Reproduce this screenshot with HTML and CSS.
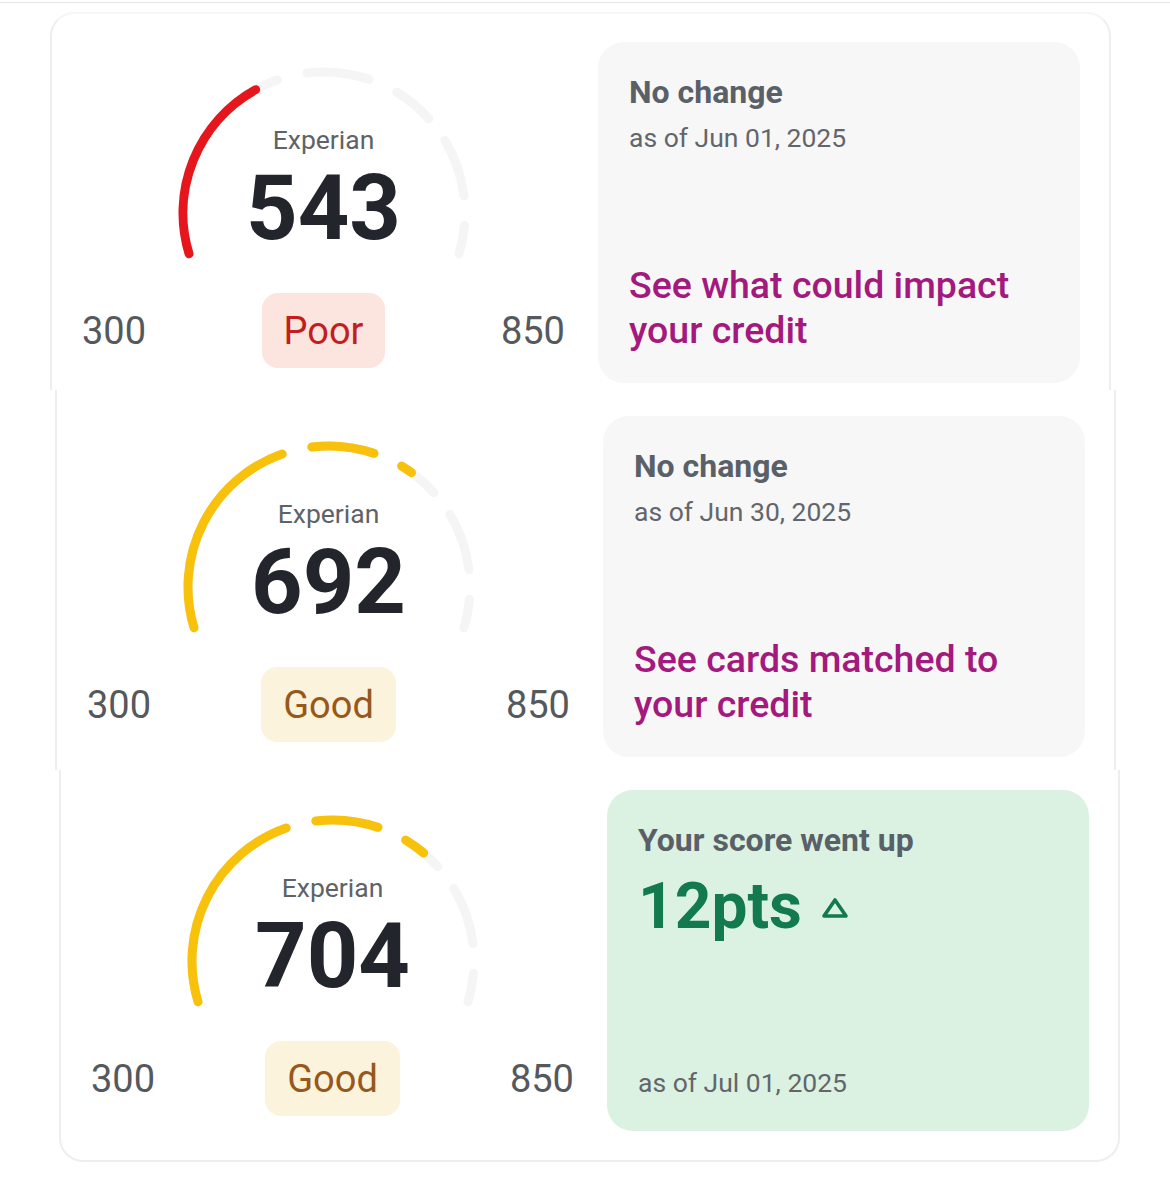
FILE: index.html
```html
<!DOCTYPE html>
<html lang="en">
<head>
<meta charset="utf-8">
<title>Credit score history</title>
<link rel="stylesheet" href="styles.css">
</head>
<body>
<div class="topline"></div>

<section class="shot shot-1">
  <div class="card card-1">
    <div class="gauge">
      <div class="dial">
        <svg class="arc" width="300" height="222" viewBox="0 0 300 222">
          <path class="track" d="M15.02 211.75 A141 141 0 0 1 103.16 38.01"/>
          <path class="track" d="M132.81 31.06 A141 141 0 0 1 194.98 37.36"/>
          <path class="track" d="M222.62 50.13 A141 141 0 0 1 254.78 76.66"/>
          <path class="track" d="M270.86 98.39 A141 141 0 0 1 289.94 153.81"/>
          <path class="track" d="M290.46 183.29 A141 141 0 0 1 284.98 211.75"/>
          <path class="fill fill-poor" d="M15.02 211.75 A141 141 0 0 1 81.64 47.68"/>
        </svg>
        <div class="readout">
          <div class="bureau">Experian</div>
          <div class="score">543</div>
        </div>
      </div>
      <div class="range">
        <span class="bound">300</span>
        <span class="rating rating-poor">Poor</span>
        <span class="bound">850</span>
      </div>
    </div>
    <div class="panel">
      <div>
        <div class="panel-title">No change</div>
        <div class="panel-date">as of Jun 01, 2025</div>
      </div>
      <a class="panel-link" href="#">See what could impact your credit</a>
    </div>
  </div>
</section>

<section class="shot shot-2">
  <div class="card card-2">
    <div class="gauge">
      <div class="dial">
        <svg class="arc" width="300" height="222" viewBox="0 0 300 222">
          <path class="track" d="M15.02 211.75 A141 141 0 0 1 103.16 38.01"/>
          <path class="track" d="M132.81 31.06 A141 141 0 0 1 194.98 37.36"/>
          <path class="track" d="M222.62 50.13 A141 141 0 0 1 254.78 76.66"/>
          <path class="track" d="M270.86 98.39 A141 141 0 0 1 289.94 153.81"/>
          <path class="track" d="M290.46 183.29 A141 141 0 0 1 284.98 211.75"/>
          <path class="fill fill-good" d="M15.02 211.75 A141 141 0 0 1 103.16 38.01"/>
          <path class="fill fill-good" d="M132.81 31.06 A141 141 0 0 1 194.98 37.36"/>
          <path class="fill fill-good" d="M222.62 50.13 A141 141 0 0 1 232.49 56.64"/>
        </svg>
        <div class="readout">
          <div class="bureau">Experian</div>
          <div class="score">692</div>
        </div>
      </div>
      <div class="range">
        <span class="bound">300</span>
        <span class="rating rating-good">Good</span>
        <span class="bound">850</span>
      </div>
    </div>
    <div class="panel">
      <div>
        <div class="panel-title">No change</div>
        <div class="panel-date">as of Jun 30, 2025</div>
      </div>
      <a class="panel-link" href="#">See cards matched to your credit</a>
    </div>
  </div>
</section>

<section class="shot shot-3">
  <div class="card card-3">
    <div class="gauge">
      <div class="dial">
        <svg class="arc" width="300" height="222" viewBox="0 0 300 222">
          <path class="track" d="M15.02 211.75 A141 141 0 0 1 103.16 38.01"/>
          <path class="track" d="M132.81 31.06 A141 141 0 0 1 194.98 37.36"/>
          <path class="track" d="M222.62 50.13 A141 141 0 0 1 254.78 76.66"/>
          <path class="track" d="M270.86 98.39 A141 141 0 0 1 289.94 153.81"/>
          <path class="track" d="M290.46 183.29 A141 141 0 0 1 284.98 211.75"/>
          <path class="fill fill-good" d="M15.02 211.75 A141 141 0 0 1 103.16 38.01"/>
          <path class="fill fill-good" d="M132.81 31.06 A141 141 0 0 1 194.98 37.36"/>
          <path class="fill fill-good" d="M222.62 50.13 A141 141 0 0 1 240.63 62.99"/>
        </svg>
        <div class="readout">
          <div class="bureau">Experian</div>
          <div class="score">704</div>
        </div>
      </div>
      <div class="range">
        <span class="bound">300</span>
        <span class="rating rating-good">Good</span>
        <span class="bound">850</span>
      </div>
    </div>
    <div class="panel panel-up">
      <div>
        <div class="panel-title">Your score went up</div>
        <div class="change">
          <span class="change-value">12pts</span>
          <svg class="change-icon" width="28" height="22" viewBox="0 0 28 22">
            <path d="M14 3 L25 19 L3 19 Z"/>
          </svg>
        </div>
      </div>
      <div class="panel-date">as of Jul 01, 2025</div>
    </div>
  </div>
</section>
</body>
</html>
```

FILE: styles.css
```css
* {
  box-sizing: border-box;
}

html,
body {
  margin: 0;
  padding: 0;
  background: #ffffff;
}

body {
  width: 1170px;
  height: 1189px;
  overflow: hidden;
  font-family: Roboto, "Noto Sans", "Liberation Sans", sans-serif;
  color: #22252b;
}

.topline {
  margin-top: 2px;
  height: 1px;
  background: #e6e6e6;
}

/* each strip clips its own card */
.shot {
  overflow: hidden;
}

.shot-1 {
  height: 387px;
}

.shot-2 {
  height: 380px;
}

.shot-3 {
  height: 419px;
}

.card {
  width: 1061px;
  display: flex;
  gap: 33px;
  padding: 0 29px 0 30px;
  border: 2px solid #eeeeee;
  background: #ffffff;
}

.card-1 {
  margin: 9px 0 0 50px;
  height: 500px;
  padding-top: 28px;
  border-top-color: #f6f6f6;
  border-bottom: none;
  border-radius: 24px 24px 0 0;
}

.card-2 {
  margin-left: 55px;
  height: 500px;
  padding-top: 26px;
  border-top: none;
  border-bottom: none;
}

.card-3 {
  margin-left: 59px;
  padding-top: 20px;
  padding-bottom: 29px;
  border-top: none;
  border-radius: 0 0 24px 24px;
}

/* score dial */
.gauge {
  width: 483px;
  flex: none;
  display: flex;
  flex-direction: column;
}

.dial {
  height: 251px;
  display: grid;
}

.arc,
.readout {
  grid-area: 1 / 1;
}

.arc {
  justify-self: center;
  align-self: start;
}

.track,
.fill {
  fill: none;
  stroke-width: 9;
  stroke-linecap: round;
}

.track {
  stroke: #f5f5f5;
}

.fill-poor {
  stroke: #e5161c;
}

.fill-good {
  stroke: #f7c10c;
}

.readout {
  padding-top: 83px;
  text-align: center;
}

.bureau {
  font-size: 26.5px;
  line-height: 30px;
  color: #5f6368;
}

.score {
  margin-top: 10px;
  font-size: 90px;
  line-height: 88px;
  font-weight: 700;
  color: #22252b;
}

.range {
  height: 75px;
  display: flex;
  align-items: center;
  justify-content: space-between;
}

.bound {
  font-size: 38px;
  color: #55585d;
}

.rating {
  height: 75px;
  display: flex;
  align-items: center;
  padding: 0 22px;
  border-radius: 16px;
  font-size: 38px;
}

.rating-poor {
  background: #fce4df;
  color: #c11f1e;
}

.rating-good {
  background: #fcf3dc;
  color: #97581a;
}

/* summary panel */
.panel {
  width: 482px;
  height: 341px;
  flex: none;
  display: flex;
  flex-direction: column;
  justify-content: space-between;
  padding: 32px 31px 30px;
  border-radius: 26px;
  background: #f7f7f7;
}

.panel-title {
  font-size: 32px;
  line-height: 36px;
  font-weight: 700;
  color: #5a6068;
}

.panel-date {
  margin-top: 10px;
  font-size: 26.5px;
  line-height: 36px;
  color: #62666c;
}

.panel-link {
  font-size: 37.5px;
  line-height: 45px;
  font-weight: 500;
  color: #a3197e;
  text-decoration: none;
}

.panel-up {
  background: #dbf2e2;
}

.change {
  margin-top: 13px;
  height: 72px;
  display: flex;
  align-items: center;
  gap: 19px;
  color: #127a4c;
}

.change-value {
  font-size: 64px;
  line-height: 72px;
  font-weight: 700;
}

.change-icon {
  margin-top: 2px;
}

.change-icon path {
  fill: none;
  stroke: #127a4c;
  stroke-width: 3.6;
  stroke-linejoin: round;
}
```
